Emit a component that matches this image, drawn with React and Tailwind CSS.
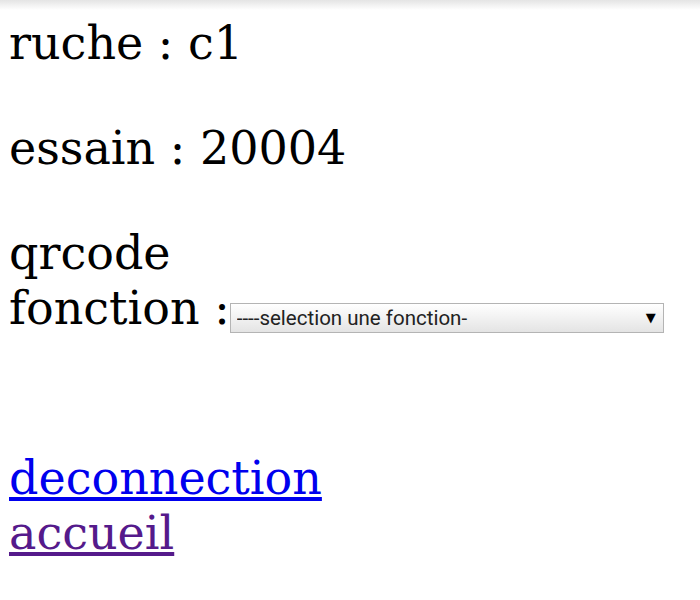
export default function App() {
  return (
    <div className="min-h-[600px] bg-white">
      {/* toolbar shadow */}
      <div className="h-[10px] bg-gradient-to-b from-[#e4e4e4] to-white" />
      <div className="pl-[9px] text-[46px] leading-[55px] text-black" style={{ fontFamily: '"DejaVu Serif", serif' }}>
        <p className="mt-[6px]">ruche : c1</p>
        <p className="mt-[50px]">essain : 20004</p>
        <p className="mt-[50px]">
          qrcode
          <br />
          fonction :
          <span className="relative inline-block align-[-1px]">
            <select className="block h-[30px] w-[434px] border border-[#b4b4b4] bg-gradient-to-b from-white to-[#e4e4e4] pl-[6px] text-[20.5px] leading-[24px] text-[#222] appearance-none" style={{ fontFamily: 'Roboto, sans-serif' }}>
              <option>----selection une fonction-</option>
            </select>
            <span className="pointer-events-none absolute right-[8px] top-1/2 -translate-y-1/2 text-[13px] leading-[14px] text-black" style={{ fontFamily: '"DejaVu Sans", sans-serif' }}>▼</span>
          </span>
        </p>
        <p className="mt-[115px]">
          <a href="#" className="text-[#0000ee] underline">deconnection</a>
          <br />
          <a href="#" className="text-[#551a8b] underline">accueil</a>
        </p>
      </div>
    </div>
  );
}
